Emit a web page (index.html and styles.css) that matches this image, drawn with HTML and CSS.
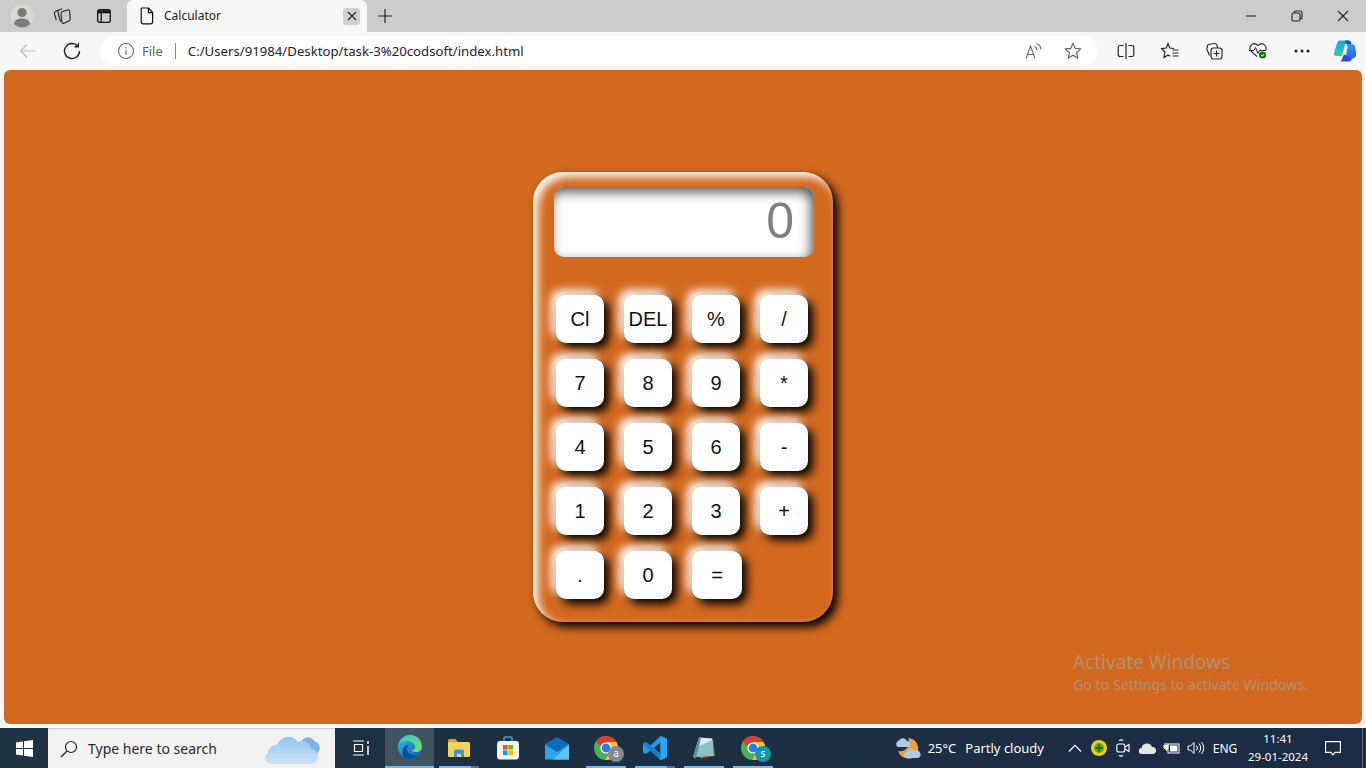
FILE: index.html
```html
<!DOCTYPE html>
<html lang="en">
<head>
<meta charset="utf-8" />
<meta name="viewport" content="width=device-width, initial-scale=1" />
<title>Calculator</title>
<link rel="stylesheet" href="styles.css">
</head>
<body>

<svg class="defs" width="0" height="0" aria-hidden="true">
  <defs>
    <g id="chrome">
      <circle cx="12" cy="12" r="12" fill="#4caf50"/>
      <path d="M12 0a12 12 0 0 1 10.4 6H12a6 6 0 0 0-5.7 4.2L1.9 5.6A12 12 0 0 1 12 0z" fill="#e53935"/>
      <path d="M22.4 6A12 12 0 0 1 11 24l5.2-8.6A6 6 0 0 0 17 9z M22.4 6H12l5 3z" fill="#fbc02d"/>
      <circle cx="12" cy="12" r="5.6" fill="#fff"/>
      <circle cx="12" cy="12" r="4.4" fill="#2a7de1"/>
    </g>
  </defs>
</svg>

<div class="tabstrip">
  <div class="slot slot-avatar">
    <svg width="24" height="24" viewBox="0 0 24 24"><circle cx="12" cy="12" r="11.5" fill="#d9d9d6"/><circle cx="12" cy="8.6" r="4.6" fill="#7b7b7b"/><path d="M3.8 20c.8-4 4-5.6 8.2-5.6s7.4 1.6 8.200 5.600a11.500 11.500 0 0 1-16.400 0z" fill="#7b7b7b"/></svg>
  </div>
  <div class="slot slot-work">
    <svg width="18" height="18" viewBox="0 0 18 18" fill="none" stroke="#222" stroke-width="1.1"><path d="M5.500 3 2.500 4.500C1.500 5 1.200 6 1.500 7l1.800 6"/><path d="M9 1.800 6 3C5 3.500 4.600 4.500 5 5.500l2.500 9"/><path d="M9.500 4.500 14.500 3c1-.3 2 .2 2.200 1.200l.5 7.800c0 1-.4 1.700-1.300 2l-5 2.200c-1 .4-2-.2-2.100-1.200L8 6.500c0-1 .5-1.700 1.500-2z"/></svg>
  </div>
  <div class="slot slot-vtabs">
    <svg width="16" height="16" viewBox="0 0 16 16" fill="none" stroke="#111" stroke-width="1.3"><rect x="1.700" y="1.700" width="12.600" height="12.600" rx="2"/><path d="M2 3.800h12" stroke-width="3"/><path d="M5.200 5v9"/></svg>
  </div>
  <div class="tab">
    <svg width="14" height="18" viewBox="0 0 14 18" fill="none" stroke="#111" stroke-width="1.2"><path d="M1.600 1h7l4 4.500V15a1.800 1.800 0 0 1-1.800 1.800H3A1.800 1.800 0 0 1 1.200 15V1.400z"/><path d="M8.400 1v4.700h4.200"/></svg>
    <span class="tab-title">Calculator</span>
    <span class="tab-close"><svg width="10" height="10" viewBox="0 0 10 10" stroke="#222" stroke-width="1.1"><path d="M1 1l8 8M9 1 1 9"/></svg></span>
  </div>
  <div class="slot slot-plus">
    <svg width="16" height="16" viewBox="0 0 16 16" stroke="#222" stroke-width="1.2"><path d="M8 1v14M1 8h14"/></svg>
  </div>
  <div class="winctl">
    <div class="slot slot-win"><svg width="12" height="12" viewBox="0 0 12 12" stroke="#222" stroke-width="1.1"><path d="M1 6h10"/></svg></div>
    <div class="slot slot-win"><svg width="12" height="12" viewBox="0 0 12 12" fill="none" stroke="#222" stroke-width="1.1"><rect x="1" y="3" width="8" height="8" rx="1.500"/><path d="M3.200 3V2.500A1.500 1.500 0 0 1 4.700 1H9.500A1.500 1.500 0 0 1 11 2.500V7.300A1.500 1.500 0 0 1 9 8.800"/></svg></div>
    <div class="slot slot-win"><svg width="12" height="12" viewBox="0 0 12 12" stroke="#222" stroke-width="1.1"><path d="M1 1l10 10M11 1 1 11"/></svg></div>
  </div>
</div>

<div class="toolbar">
  <div class="slot slot-nav"><svg width="18" height="16" viewBox="0 0 18 16" fill="none" stroke="#bdbdbd" stroke-width="1.2"><path d="M17 8H1.500M8 1.500 1.500 8 8 14.500"/></svg></div>
  <div class="slot slot-nav"><svg width="18" height="18" viewBox="0 0 18 18" fill="none" stroke="#222" stroke-width="1.4"><path d="M14.800 4.300A7.500 7.500 0 1 0 16.500 9"/><path d="M15.300 1v3.800h-3.800"/></svg></div>
  <div class="address">
    <svg width="18" height="18" viewBox="0 0 18 18" fill="none" stroke="#666" stroke-width="1.1"><circle cx="9" cy="9" r="7.500"/><path d="M9 8v5M9 5v1.400"/></svg>
    <span class="file">File</span>
    <span class="sep"></span>
    <span class="url">C:/Users/91984/Desktop/task-3%20codsoft/index.html</span>
    <span class="addr-icons">
      <svg width="17" height="18" viewBox="0 0 17 18" fill="none" stroke="#666" stroke-width="1.1"><path d="M1 16.500 5.500 4 10 16.500M2.500 12.500h6"/><path d="M9.500 4.500a4 4 0 0 1 2.500 3.500M11.500 1.500a7 7 0 0 1 4.500 6"/></svg>
      <svg width="18" height="18" viewBox="0 0 18 18" fill="none" stroke="#666" stroke-width="1.2"><path d="M9 1.400l2.300 5 5.300.6-4 3.600 1.100 5.400L9 13.300 4.300 16l1.100-5.400-4-3.600 5.300-.6z"/></svg>
    </span>
  </div>
  <div class="slot slot-tool first"><svg width="18" height="16" viewBox="0 0 18 16" fill="none" stroke="#222" stroke-width="1.2"><path d="M9 0v16M6.500 2.500H3A1.800 1.800 0 0 0 1.200 4.300v7.400A1.800 1.800 0 0 0 3 13.500h3.500M11.500 2.500H15a1.800 1.800 0 0 1 1.800 1.800v7.400a1.800 1.800 0 0 1-1.800 1.800h-3.500"/></svg></div>
  <div class="slot slot-tool"><svg width="18" height="18" viewBox="0 0 18 18" fill="none" stroke="#222" stroke-width="1.2"><path d="M13 6.500 8.800 6 7 1.800 5.200 6 .8 6.600 4 10 3 15.500 7 13l2 1.300"/><path d="M11.500 8h6M11.500 11h6M11.500 14h6"/></svg></div>
  <div class="slot slot-tool"><svg width="18" height="18" viewBox="0 0 18 18" fill="none" stroke="#222" stroke-width="1.1"><path d="M4.500 13.500 2 7.500A2 2 0 0 1 2.500 5 2 2 0 0 1 3.500 2.500L9 1.500A2.500 2.500 0 0 1 12 3.500l.5 2.500"/><rect x="6" y="6" width="11" height="11" rx="2.500"/><path d="M11.500 8.500v6M8.500 11.500h6"/></svg></div>
  <div class="slot slot-tool"><svg width="20" height="18" viewBox="0 0 20 18"><path d="M9 14.500 2.800 8.800A4.400 4.400 0 0 1 9 2.700l1 1 1-1a4.400 4.400 0 0 1 6.200 6.100" fill="none" stroke="#222" stroke-width="1.1"/><path d="M1 8.500h5l1.500-3 2.500 6 1.500-3h6" fill="none" stroke="#222" stroke-width="1"/><circle cx="14.500" cy="13" r="3.600" fill="#107c10"/><path d="M12.900 13l1.200 1.200 2-2.200" fill="none" stroke="#fff" stroke-width="1"/></svg></div>
  <div class="slot slot-tool"><svg width="16" height="4" viewBox="0 0 16 4" fill="#222"><circle cx="2" cy="2" r="1.500"/><circle cx="8" cy="2" r="1.500"/><circle cx="14" cy="2" r="1.500"/></svg></div>
  <div class="slot slot-copilot">
    <svg width="24" height="24" viewBox="0 0 24 24">
      <defs>
        <linearGradient id="cpa" x1="0.500" y1="0" x2="0.300" y2="1"><stop offset="0" stop-color="#1a9fe6"/><stop offset="1" stop-color="#35d0a0"/></linearGradient>
        <linearGradient id="cpb" x1="0.300" y1="0" x2="0.700" y2="1"><stop offset="0" stop-color="#2f9bf0"/><stop offset="1" stop-color="#3a5fe6"/></linearGradient>
      </defs>
      <path d="M14 5h5c1.500 0 2.500 1 3 2.500l1 6.500c.5 3-1 5.500-4 5.500h-6z" fill="url(#cpb)"/>
      <path d="M7 1.500h9c-1.500 0-3 1-3.500 2.500L9 17H3.500C1.500 17 .6 15.500 1 14L4 4.500C4.500 2.500 5.500 1.500 7 1.500z" fill="url(#cpa)"/>
      <path d="M12 1.500h4c1.500 0 2.200 1 2.500 3.500h-6z" fill="#135fa8"/>
      <path d="M11 15 9.500 19c-.6 2-1.500 3.500-3 3.500h9c2 0 3-1 3.500-3z" fill="#2a4ae0"/>
      <path d="M14 7.500 11 15.500" stroke="#f7f7f7" stroke-width="2" fill="none"/>
    </svg>
  </div>
</div>

<main class="page">
  <div class="calculator">
    <div class="display">0</div>
    <div class="keys">
      <button class="key">Cl</button>
      <button class="key">DEL</button>
      <button class="key">%</button>
      <button class="key">/</button>
      <button class="key">7</button>
      <button class="key">8</button>
      <button class="key">9</button>
      <button class="key">*</button>
      <button class="key">4</button>
      <button class="key">5</button>
      <button class="key">6</button>
      <button class="key">-</button>
      <button class="key">1</button>
      <button class="key">2</button>
      <button class="key">3</button>
      <button class="key">+</button>
      <button class="key">.</button>
      <button class="key">0</button>
      <button class="key key-wide">=</button>
    </div>
  </div>
  <div class="watermark">
    <div class="wm-big">Activate Windows</div>
    <div class="wm-small">Go to Settings to activate Windows.</div>
  </div>
</main>

<div class="taskbar">
  <div class="start"><svg width="17" height="17" viewBox="0 0 17 17" fill="#fff"><path d="M0 2.400 7 1.400V8H0zM8 1.200 17 0v8H8zM0 9h7v6.600L0 14.600zM8 9h9v8l-9-1.200z"/></svg></div>
  <div class="search">
    <svg width="18" height="18" viewBox="0 0 18 18" fill="none" stroke="#222" stroke-width="1.2"><circle cx="11" cy="7" r="5.500"/><path d="M7 11 1 17"/></svg>
    <span class="search-text">Type here to search</span>
    <svg class="search-cloud" width="56" height="32" viewBox="0 0 56 32">
      <defs><linearGradient id="cl" x1="0" y1="0" x2="0" y2="1"><stop offset="0" stop-color="#8fc4f0"/><stop offset="1" stop-color="#cfe3f5"/></linearGradient></defs>
      <path d="M36 10a7 7 0 0 1 13-2 7 7 0 0 1 5 10 6 6 0 0 1-5 4H38z" fill="#7fb4e6"/>
      <path d="M6 31a6 6 0 0 1-3-11 8 8 0 0 1 9-8A12 12 0 0 1 33 9a9 9 0 0 1 13 7 7.500 7.500 0 0 1-1 15z" fill="url(#cl)"/>
    </svg>
  </div>
  <div class="tb-slot tb-taskview"><svg width="18" height="16" viewBox="0 0 18 16" fill="none" stroke="#fff" stroke-width="1.2"><path d="M1 1h11M1 15h11M2.500 4.500h8v7h-8z"/><path d="M16 1v3M16 6v9" stroke-width="1.5"/></svg></div>
  <div class="tb-slot tb-active">
    <svg width="24" height="24" viewBox="0 0 24 24">
      <defs>
        <linearGradient id="edgeA" x1="0" y1="0" x2="1" y2="1"><stop offset="0" stop-color="#35c1f1"/><stop offset="1" stop-color="#0c59a4"/></linearGradient>
        <linearGradient id="edgeB" x1="0" y1="0" x2="1" y2="1"><stop offset="0" stop-color="#39c8e0"/><stop offset="1" stop-color="#7fdc54"/></linearGradient>
      </defs>
      <circle cx="12" cy="12" r="12" fill="url(#edgeA)"/>
      <path d="M1 9C3 3 8 0 12 0c7 0 12 5 12 12 0 3-2.500 5-6 5-2.500 0-4-1-4.500-2 3 .5 4.500-2 3.500-4C15.500 7 12 5.500 8 6S2 8 1 9z" fill="url(#edgeB)"/>
      <path d="M19 20.500A12 12 0 0 1 8 23.500C4 21 3.500 16 5.500 13 7 10.500 9.500 9.500 11 9.700 8 11.500 8.500 17 12 19c2.500 1.500 5 1.500 7 1.500z" fill="#0a4f9c"/>
    </svg>
  </div>
  <div class="tb-slot tb-run tb-run-multi">
    <svg width="22" height="18" viewBox="0 0 22 18"><path d="M0 1.500A1.500 1.500 0 0 1 1.500 0h6L10 3H0z" fill="#d9a520"/><path d="M0 3h20.500A1.500 1.500 0 0 1 22 4.500v12a1.500 1.500 0 0 1-1.500 1.500h-19A1.500 1.500 0 0 1 0 16.500z" fill="#fbd35c"/><path d="M6 18v-6a1.500 1.500 0 0 1 1.500-1.500h7A1.500 1.500 0 0 1 16 12v6h-3v-3H9v3z" fill="#2f9ae0"/></svg>
  </div>
  <div class="tb-slot">
    <svg width="24" height="24" viewBox="0 0 24 24"><path d="M8 6V3a1.500 1.500 0 0 1 1.500-1.500h5A1.500 1.500 0 0 1 16 3v3" fill="none" stroke="#2aa7e8" stroke-width="1.6" transform="translate(0 -.5)"/><rect x="1" y="5" width="22" height="18.500" rx="3" fill="#f5f5f5"/><rect x="7" y="9" width="4.600" height="4.600" fill="#f25022"/><rect x="12.400" y="9" width="4.600" height="4.600" fill="#7fba00"/><rect x="7" y="14.400" width="4.600" height="4.600" fill="#00a4ef"/><rect x="12.400" y="14.400" width="4.600" height="4.600" fill="#ffb900"/></svg>
  </div>
  <div class="tb-slot">
    <svg width="24" height="24" viewBox="0 0 24 24"><rect y="8" width="24" height="15.500" fill="#29a8ea"/><path d="M0 8.500 12 16l12-7.500V8L12 1 0 8z" fill="#0f6cbd"/><path d="M24 8.500V23.500H8z" fill="#5cc6f2"/></svg>
  </div>
  <div class="tb-slot tb-run">
    <svg width="24" height="24" viewBox="0 0 24 24"><use href="#chrome"/></svg>
    <span class="badge badge-a">a</span>
  </div>
  <div class="tb-slot tb-run tb-run-multi">
    <svg width="24" height="24" viewBox="0 0 24 24"><path d="M17.500 0 24 2.800v18.400L17.500 24 7.500 14.500 2.800 18 0 16.500V7.500L2.800 6l4.700 3.500z" fill="#1f9cf0"/><path d="M17.500 6.500 10.500 12l7 5.500z" fill="#1b2d3d"/><path d="M17.500 0 24 2.800v18.400L17.500 24z" fill="#2aa5f5"/><path d="M0 7.500 2.800 6l14.700 11.500V24L2.800 11z" fill="#0a78c9" opacity=".7"/></svg>
  </div>
  <div class="tb-slot tb-run">
    <svg width="24" height="24" viewBox="0 0 24 24"><path d="M8 1.500 21 3l2 17-15 2.500z" fill="#8a6a2c"/><path d="M7 1.500 20 2.500l1.500 17L1 21z" fill="#d6eef0"/><path d="M5 11 20.500 4l1 15.500L1 21z" fill="#8dc0c6"/><path d="M7 1.500 1 21l2.500 2L9 2.500z" fill="#5c8f98"/></svg>
  </div>
  <div class="tb-slot tb-run">
    <svg width="24" height="24" viewBox="0 0 24 24"><use href="#chrome"/></svg>
    <span class="badge badge-s">s</span>
  </div>

  <div class="tray">
    <svg width="26" height="24" viewBox="0 0 26 24"><path d="M13 2a10.500 10.500 0 0 1 3 20.500A11 11 0 0 1 3 15 9 9 0 0 0 13 2z" fill="#f0a030"/><path d="M3 11a3.500 3.500 0 0 1 1-6.500 4.500 4.500 0 0 1 8 .5 3 3 0 0 1 1 6z" fill="#a9cdee"/><path d="M12 22a3 3 0 0 1 0-6 4 4 0 0 1 7.500-1 3.500 3.500 0 0 1 4 7z" fill="#a9cdee"/></svg>
    <span class="temp">25°C</span>
    <span class="cond">Partly cloudy</span>
    <div class="tray-slot tray-first"><svg width="14" height="8" viewBox="0 0 14 8" fill="none" stroke="#fff" stroke-width="1.1"><path d="M1 7.500 7 1.300l6 6.200"/></svg></div>
    <div class="tray-slot"><svg width="16" height="16" viewBox="0 0 16 16"><circle cx="8" cy="8" r="8" fill="#e8d018"/><circle cx="8" cy="8" r="5" fill="#6aa818"/><path d="M8 4.500v7M4.500 8h7" stroke="#1d6a10" stroke-width="2"/></svg></div>
    <div class="tray-slot"><svg width="14" height="18" viewBox="0 0 14 18" fill="none" stroke="#fff" stroke-width="1.1"><path d="M3 1.500a4 4 0 0 1 4 0M3 16.500a4 4 0 0 0 4 0"/><rect x=".8" y="5" width="8" height="8" rx="2"/><path d="M9 8l4-2.500v7L9 10"/></svg></div>
    <div class="tray-slot"><svg width="17" height="11" viewBox="0 0 17 11"><path d="M3 11a3 3 0 0 1-.5-6A5.500 5.500 0 0 1 13 4a3.500 3.500 0 0 1 1 7z" fill="#e6e6e6"/></svg></div>
    <div class="tray-slot"><svg width="17" height="12" viewBox="0 0 17 12" fill="#fff"><path d="M.5 3h1V1h1v2h1V1h1v2h1v3L4 8v1H3V8L.5 6z"/><rect x="5" y="2" width="11" height="9" fill="none" stroke="#fff" stroke-width="1"/><rect x="7" y="3.500" width="7.500" height="6"/></svg></div>
    <div class="tray-slot"><svg width="17" height="14" viewBox="0 0 17 14" fill="none" stroke="#fff" stroke-width="1"><path d="M1 5v4h2.500L7 12.500v-11L3.500 5z"/><path d="M9.500 4.500a4 4 0 0 1 0 5M12 2.500a7 7 0 0 1 0 9M14.500 1a10 10 0 0 1 0 12"/></svg></div>
    <span class="lang">ENG</span>
    <div class="clock"><div>11:41</div><div>29-01-2024</div></div>
    <div class="notif"><svg width="16" height="15" viewBox="0 0 16 15" fill="none" stroke="#fff" stroke-width="1.1"><path d="M.6.6h14.800v10.800H10l-2 2.500-2-2.500H.6z"/></svg></div>
    <div class="show-desktop"></div>
  </div>
</div>

</body>
</html>
```

FILE: styles.css
```css
html {font-family: "Noto Sans", "Open Sans", sans-serif;}
body {margin: 0; height: 768px; display: flex; flex-direction: column; background: #f7f7f7; overflow: hidden;}
.defs {position: absolute;}
.slot {display: flex; align-items: center; justify-content: center; flex: none;}

/* tab strip */
.tabstrip {display: flex; height: 32px; background: #cccccc; flex: none;}
.slot-avatar {width: 44px;}
.slot-work {width: 36px;}
.slot-vtabs {width: 47px;}
.tab {width: 240px; display: flex; align-items: center; padding: 0 7px 0 13px; box-sizing: border-box; background: #f7f7f7; border-radius: 6px 6px 0 0; flex: none;}
.tab-title {font-size: 12px; color: #222; margin: 0 0 1px 10px; flex: 1;}
.tab-close {width: 17px; height: 17px; background: #cfcfcf; border-radius: 3px; display: flex; align-items: center; justify-content: center;}
.slot-plus {width: 35px;}
.winctl {display: flex; margin-left: auto;}
.slot-win {width: 46px;}

/* address row */
.toolbar {display: flex; align-items: flex-start; height: 38px; padding: 4px 0 0 6px; box-sizing: border-box; flex: none;}
.slot-nav {width: 44px; height: 30px;}
.address {width: 998px; height: 30px; margin-left: 6px; background: #fff; border-radius: 15px; display: flex; align-items: center; padding: 0 16px 0 17px; box-sizing: border-box; flex: none;}
.file {font-size: 13px; color: #5f5f5f; margin-left: 7px;}
.sep {width: 1px; height: 16px; background: #8a8a8a; margin: 0 12px;}
.url {font-size: 13.2px; color: #1a2238;}
.addr-icons {display: flex; align-items: center; gap: 22px; margin-left: auto;}
.slot-tool {width: 44px; height: 30px;}
.slot-tool.first {margin-left: 6px;}
.slot-copilot {width: 42px; height: 30px;}

/* viewport */
.page {flex: 1; margin: 0 4px 4px; background: chocolate; border-radius: 6px; display: flex; align-items: center; justify-content: center; position: relative;}
.calculator {width: 300px; height: 450px; box-sizing: border-box; padding: 15px 19px 0 21px; background: chocolate; border-radius: 30px; box-shadow: 5px 5px 10px #000, inset 5px 5px 10px #fff;}
.display {height: 70px; background: #fff; border-radius: 10px; box-shadow: inset -3px 5px 12px #555; font-family: "Liberation Sans", Arial, sans-serif; font-size: 50px; line-height: 68px; color: #808080; text-align: right; padding-right: 20px;}
.keys {display: grid; grid-template-columns: repeat(4, 48px); grid-auto-rows: 48px; gap: 16px 20px; margin: 38px 0 0 2px;}
.key {width: 48px; height: 48px; padding: 0; border: 0; background: #fff; border-radius: 10px; color: #111; font-family: "Liberation Sans", Arial, sans-serif; font-size: 20px; box-shadow: 5px 5px 10px #000, -5px -5px 10px #fff;}
.key-wide {width: 50px;}
.watermark {position: absolute; left: 1069px; top: 579px; color: rgba(165, 165, 165, .65);}
.wm-big {font-size: 19px; line-height: 26px;}
.wm-small {font-size: 14.2px; line-height: 20px;}

/* taskbar */
.taskbar {display: flex; height: 40px; background: linear-gradient(90deg, #1e3340, #1c2b45); flex: none; color: #fff;}
.start {width: 48px; display: flex; align-items: center; justify-content: center; flex: none;}
.search {width: 287px; background: #f2f2f2; border-top: 1px solid #ccc; box-sizing: border-box; display: flex; align-items: center; padding-left: 12px; flex: none;}
.search-text {font-size: 14px; color: #1f2a3c; margin-left: 10px;}
.search-cloud {margin-left: auto; margin-right: 14px;}
.tb-slot {width: 49px; display: flex; align-items: center; justify-content: center; flex: none; position: relative;}
.tb-taskview {width: 50px; margin-left: 1px; margin-right: -1px;}
.tb-active {background: #40545f; border-bottom: 2px solid #76b9ed; box-sizing: border-box;}
.tb-run::after {content: ""; position: absolute; left: 5px; right: 4px; bottom: 0; height: 2px; background: #76b9ed;}
.tb-run-multi::after {background: linear-gradient(90deg, #76b9ed 80%, #4a7a9c 80%);}
.badge {position: absolute; left: 27px; top: 18px; width: 16px; height: 16px; border-radius: 50%; font-size: 10px; line-height: 15px; text-align: center; color: #fff;}
.badge-a {background: #7d8a94;}
.badge-s {background: #0e97ad;}

/* tray */
.tray {display: flex; align-items: center; margin-left: auto; font-size: 13px;}
.temp {margin-left: 7px;}
.cond {margin-left: 9px;}
.tray-slot {width: 24px; display: flex; align-items: center; justify-content: center; flex: none;}
.tray-first {margin-left: 19px;}
.lang {width: 36px; font-size: 12px; text-align: center; flex: none;}
.clock {width: 70px; font-size: 11.5px; line-height: 18px; text-align: center; flex: none;}
.notif {width: 40px; display: flex; justify-content: center; flex: none;}
.show-desktop {width: 4px; height: 40px; margin-left: 9px; border-left: 1px solid #5a6a78; box-sizing: border-box;}
```
